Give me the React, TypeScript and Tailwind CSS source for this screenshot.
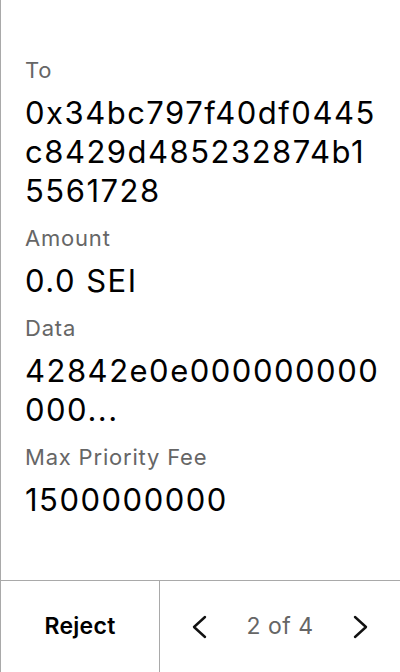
import { ReactNode } from 'react';

type Field = {
  label: string;
  value: string;
};

const fields: Field[] = [
  { label: 'To', value: '0x34bc797f40df0445c8429d485232874b15561728' },
  { label: 'Amount', value: '0.0 SEI' },
  { label: 'Data', value: '42842e0e000000000000...' },
  { label: 'Max Priority Fee', value: '1500000000' },
];

function Chevron({ dir }: { dir: 'left' | 'right' }) {
  return (
    <svg width="18" height="24" viewBox="0 0 18 24" fill="none" stroke="#111" strokeWidth="2.4" strokeLinecap="round" strokeLinejoin="round">
      {dir === 'left' ? <polyline points="15,2 4,12 15,22" /> : <polyline points="3,2 14,12 3,22" />}
    </svg>
  );
}

function Row({ label, children }: { label: string; children: ReactNode }) {
  return (
    <div className="flex flex-col gap-[9px]">
      <div className="text-[22px] leading-[28px] tracking-[0.8px] text-[#666666]">{label}</div>
      <div className="text-[31px] leading-[39px] tracking-[1.5px] text-black break-all">{children}</div>
    </div>
  );
}

export default function App() {
  return (
    <div className="flex h-[672px] w-[400px] flex-col border-l border-[#a9a9a9] bg-white font-['Inter',sans-serif]">
      <div className="flex flex-1 flex-col gap-[14px] pl-6 pr-[20px] pt-[56px]">
        {fields.map((f) => (
          <Row key={f.label} label={f.label}>
            {f.value}
          </Row>
        ))}
      </div>
      <div className="flex h-[92px] border-t border-[#a9a9a9]">
        <button className="flex w-[159px] items-center justify-center border-r border-[#a9a9a9] text-[23px] font-semibold tracking-[0.3px] text-black">
          Reject
        </button>
        <div className="flex flex-1 items-center justify-between px-[30px]">
          <Chevron dir="left" />
          <span className="text-[23px] tracking-[0.5px] text-[#666666]">2 of 4</span>
          <Chevron dir="right" />
        </div>
      </div>
    </div>
  );
}
